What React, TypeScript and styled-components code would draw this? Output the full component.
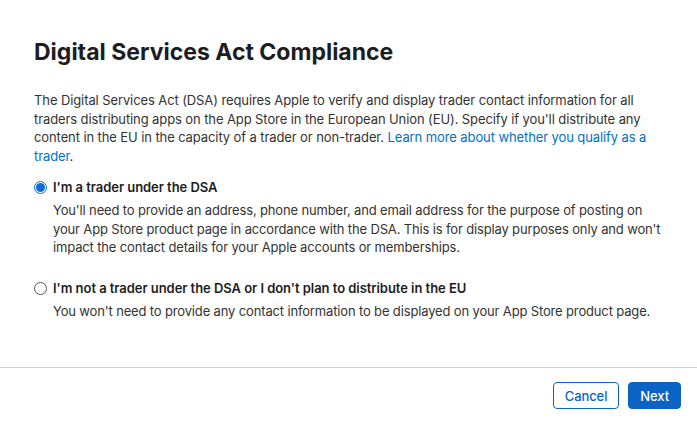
import React, { useState } from "react";
import styled, { createGlobalStyle } from "styled-components";

const Global = createGlobalStyle`
  html, body { margin: 0; padding: 0; background: #fff; }
  body { font-family: Inter, "Noto Sans", "Liberation Sans", sans-serif; -webkit-font-smoothing: antialiased; }
  * { box-sizing: border-box; }
`;

const Dialog = styled.div`
  width: 697px;
  height: 421px;
  display: flex;
  flex-direction: column;
  background: #fff;
`;

const Body = styled.div`
  flex: 1;
  padding: 37px 32px 0 34px;
  display: flex;
  flex-direction: column;
`;

const Title = styled.h1`
  margin: 0;
  font-size: 23px;
  line-height: 30px;
  font-weight: 700;
  color: #1d1d1f;
  letter-spacing: 0;
`;

const Intro = styled.p`
  margin: 24px 0 0 0;
  font-size: 13px;
  line-height: 18.7px;
  letter-spacing: -0.1px;
  color: #333;
`;

const Link = styled.a`
  color: #0070c9;
  text-decoration: none;
`;

const Options = styled.div`
  display: flex;
  flex-direction: column;
  gap: 22px;
  margin-top: 12px;
`;

const Option = styled.label`
  display: grid;
  grid-template-columns: 19px 1fr;
  cursor: pointer;
`;

const Radio = styled.span<{ $checked: boolean }>`
  width: 13px;
  height: 13px;
  margin-top: 3px;
  border-radius: 50%;
  border: 1px solid ${(p) => (p.$checked ? "#0a6ce0" : "#555")};
  background: #fff;
  display: flex;
  align-items: center;
  justify-content: center;
  &::after {
    content: "";
    width: 9px;
    height: 9px;
    border-radius: 50%;
    background: ${(p) => (p.$checked ? "#0a6ce0" : "transparent")};
  }
`;

const Label = styled.span`
  font-size: 13px;
  line-height: 19px;
  font-weight: 600;
  letter-spacing: -0.05px;
  color: #1d1d1f;
`;

const Desc = styled.span`
  grid-column: 2;
  margin-top: 4px;
  font-size: 13px;
  line-height: 18.7px;
  letter-spacing: -0.15px;
  color: #333;
`;

const Footer = styled.div`
  border-top: 1px solid #d2d2d2;
  height: 54px;
  display: flex;
  justify-content: flex-end;
  align-items: flex-start;
  gap: 9px;
  padding: 14px 16px 0 0;
`;

const Button = styled.button<{ $primary?: boolean }>`
  height: 27px;
  padding: 0 11px;
  border-radius: 4px;
  font-family: inherit;
  font-size: 13px;
  font-weight: 500;
  letter-spacing: -0.1px;
  cursor: pointer;
  border: 1px solid #0b63c5;
  background: ${(p) => (p.$primary ? "#0b63c5" : "#fff")};
  color: ${(p) => (p.$primary ? "#fff" : "#0b63c5")};
`;

export default function App() {
  const [choice, setChoice] = useState<"trader" | "not">("trader");
  return (
    <Dialog>
      <Global />
      <Body>
        <Title>Digital Services Act Compliance</Title>
        <Intro>
          The Digital Services Act (DSA) requires Apple to verify and display trader contact information for all
          traders distributing apps on the App Store in the European Union (EU). Specify if you'll distribute any
          content in the EU in the capacity of a trader or non-trader.{" "}
          <Link href="#">Learn more about whether you qualify as a trader</Link>.
        </Intro>
        <Options>
          <Option onClick={() => setChoice("trader")}>
            <Radio $checked={choice === "trader"} />
            <Label>I'm a trader under the DSA</Label>
            <Desc>
              You'll need to provide an address, phone number, and email address for the purpose of posting on
              your App Store product page in accordance with the DSA. This is for display purposes only and won't
              impact the contact details for your Apple accounts or memberships.
            </Desc>
          </Option>
          <Option onClick={() => setChoice("not")}>
            <Radio $checked={choice === "not"} />
            <Label>I'm not a trader under the DSA or I don't plan to distribute in the EU</Label>
            <Desc>You won't need to provide any contact information to be displayed on your App Store product page.</Desc>
          </Option>
        </Options>
      </Body>
      <Footer>
        <Button>Cancel</Button>
        <Button $primary>Next</Button>
      </Footer>
    </Dialog>
  );
}
